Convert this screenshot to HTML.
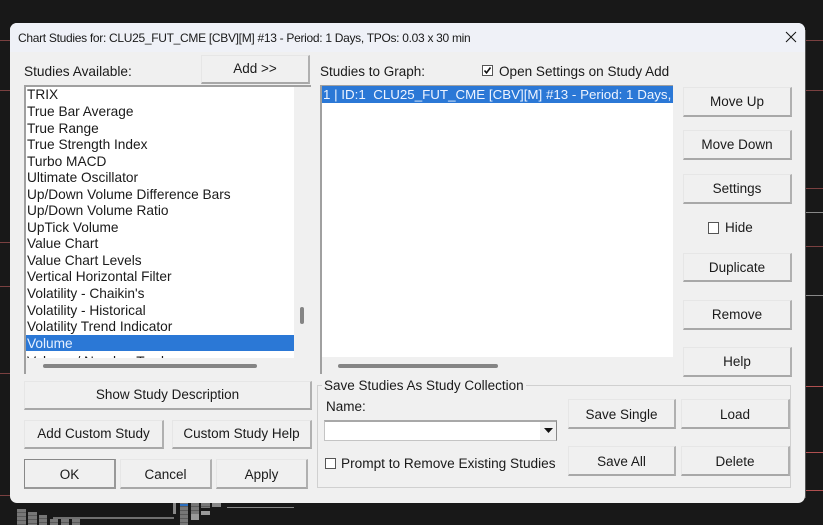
<!DOCTYPE html>
<html><head><meta charset="utf-8"><style>
html,body{margin:0;padding:0;width:823px;height:525px;overflow:hidden;background:#181818;font-family:"Liberation Sans",sans-serif;font-size:13.5px;color:#1a1a1a}
div{position:absolute;box-sizing:border-box;white-space:nowrap}
.l{height:1px}
.t{line-height:16px;height:16px}
.b{background:#f0f0f0;border:1px solid #e6e6e6;border-right:2px solid #b0b0b0;border-bottom:2px solid #a8a8a8;text-align:center;color:#1a1a1a;display:flex;align-items:center;justify-content:center}
.u{padding-bottom:1px}
.d{padding-top:1px}
.r{height:16px;line-height:16px;left:27px;color:#1a1a1a;font-size:13.7px}
.g{background:repeating-linear-gradient(#777 0 3px,#5a5a5a 3px 4px)}
</style></head><body>
<div class="l" style="left:0;top:40px;width:12px;background:#7a4040"></div>
<div class="l" style="left:0;top:90px;width:12px;background:#7a4040"></div>
<div class="l" style="left:0;top:242px;width:12px;background:#7a4040"></div>
<div class="l" style="left:0;top:286px;width:12px;background:#7a4040"></div>
<div class="l" style="left:0;top:373px;width:12px;background:#7a4040"></div>
<div class="l" style="left:0;top:495px;width:12px;background:#7a4040"></div>
<div class="l" style="left:805px;top:40px;width:18px;background:#7a4040"></div>
<div class="l" style="left:805px;top:90px;width:18px;background:#7a4040"></div>
<div class="l" style="left:805px;top:188px;width:18px;background:#7a4040"></div>
<div class="l" style="left:805px;top:212px;width:18px;background:#888"></div>
<div class="l" style="left:805px;top:246px;width:18px;background:#7a4040"></div>
<div class="l" style="left:805px;top:295px;width:18px;background:#888"></div>
<div class="l" style="left:805px;top:386px;width:18px;background:#b05050"></div>
<div class="l" style="left:805px;top:452px;width:18px;background:#b05050"></div>
<div class="l" style="left:805px;top:490px;width:18px;background:#b05050"></div>
<div style="left:805px;top:30px;width:1px;height:468px;background:#555"></div>

<div class="g" style="left:17px;top:509px;width:9px;height:16px"></div>
<div class="g" style="left:28px;top:512px;width:9px;height:13px"></div>
<div class="g" style="left:39px;top:515px;width:8px;height:10px"></div>
<div class="g" style="left:50px;top:519px;width:8px;height:6px"></div>
<div class="g" style="left:61px;top:519px;width:8px;height:6px"></div>
<div class="g" style="left:72px;top:519px;width:8px;height:6px"></div>
<div class="l" style="left:53px;top:517px;width:121px;height:2px;background:#707070"></div>
<div style="left:173px;top:503px;width:3px;height:11px;background:#888"></div>
<div class="g" style="left:180px;top:503px;width:8px;height:22px"></div>
<div style="left:180px;top:504px;width:8px;height:2px;background:#2a6fc0"></div>
<div class="g" style="left:191px;top:503px;width:8px;height:11px"></div>
<div style="left:191px;top:514px;width:8px;height:6px;background:#999"></div>
<div class="g" style="left:201px;top:503px;width:9px;height:5px"></div>
<div style="left:201px;top:511px;width:9px;height:4px;background:#999"></div>
<div style="left:212px;top:503px;width:9px;height:4px;background:#888"></div>
<div class="l" style="left:227px;top:507px;width:67px;background:#888"></div>

<div style="left:10px;top:23px;width:795px;height:480px;background:#f0f0f0;border-radius:7px;overflow:hidden">
<div style="left:0;top:0;width:795px;height:29px;background:#eff1f7"></div>
</div>
<div class="t" style="left:18px;top:30px;font-size:12px;letter-spacing:-.3px">Chart Studies for: CLU25_FUT_CME [CBV][M] #13 - Period: 1 Days, TPOs: 0.03 x 30 min</div>
<svg style="position:absolute;left:785px;top:31px" width="12" height="12"><path d="M1 1L11 11M11 1L1 11" stroke="#111" stroke-width="1" fill="none"/></svg>

<div class="t" style="left:24px;top:64px;font-size:13.7px">Studies Available:</div>
<div class="b" style="left:201px;top:55px;width:109px;height:29px;padding-bottom:1px">Add &gt;&gt;</div>

<div style="left:24px;top:85px;width:287px;height:289px;border-top:2px solid #a0a0a0;border-left:2px solid #a0a0a0"></div>
<div style="left:26px;top:87px;width:268px;height:271px;background:#fff;overflow:hidden"></div>
<div class="r" style="top:87px">TRIX</div>
<div class="r" style="top:104px">True Bar Average</div>
<div class="r" style="top:121px">True Range</div>
<div class="r" style="top:137px">True Strength Index</div>
<div class="r" style="top:154px">Turbo MACD</div>
<div class="r" style="top:170px">Ultimate Oscillator</div>
<div class="r" style="top:187px">Up/Down Volume Difference Bars</div>
<div class="r" style="top:203px">Up/Down Volume Ratio</div>
<div class="r" style="top:220px">UpTick Volume</div>
<div class="r" style="top:236px">Value Chart</div>
<div class="r" style="top:253px">Value Chart Levels</div>
<div class="r" style="top:269px">Vertical Horizontal Filter</div>
<div class="r" style="top:286px">Volatility - Chaikin's</div>
<div class="r" style="top:303px">Volatility - Historical</div>
<div class="r" style="top:319px">Volatility Trend Indicator</div>
<div style="left:26px;top:335px;width:268px;height:16px;background:#2b78d6"></div>
<div class="r" style="top:336px;color:#e6f0ff">Volume</div>
<div style="left:26px;top:351px;width:268px;height:7px;overflow:hidden;background:#fff"><div class="r" style="left:1px;top:3px">Volume / Number Trades</div></div>
<div style="left:43px;top:364px;width:214px;height:4px;background:#858585;border-radius:2px"></div>
<div style="left:300px;top:307px;width:4px;height:17px;background:#858585;border-radius:2px"></div>

<div class="b u" style="left:24px;top:381px;width:288px;height:29px">Show Study Description</div>
<div class="b u" style="left:24px;top:420px;width:140px;height:29px">Add Custom Study</div>
<div class="b u" style="left:172px;top:420px;width:140px;height:29px">Custom Study Help</div>
<div class="b d" style="left:24px;top:459px;width:92px;height:30px;border:1px solid #888;border-right:2px solid #999;border-bottom:2px solid #999">OK</div>
<div class="b d" style="left:120px;top:459px;width:92px;height:30px">Cancel</div>
<div class="b d" style="left:216px;top:459px;width:92px;height:30px">Apply</div>

<div class="t" style="left:320px;top:64px">Studies to Graph:</div>
<div style="left:482px;top:65px;width:11px;height:11px;border:1px solid #555;background:#fff"></div>
<svg style="position:absolute;left:483px;top:66px" width="9" height="9"><path d="M1.5 4.5L3.5 6.8L7.5 1.5" stroke="#111" stroke-width="1.6" fill="none"/></svg>
<div class="t" style="left:499px;top:64px;font-size:13.55px">Open Settings on Study Add</div>

<div style="left:320px;top:85px;width:353px;height:289px;border-top:1px solid #a0a0a0;border-left:2px solid #a0a0a0"></div>
<div style="left:322px;top:86px;width:351px;height:271px;background:#fff"></div>
<div style="left:322px;top:86px;width:351px;height:17px;background:#2b78d6;color:#eef4ff;overflow:hidden;line-height:17px;padding-left:1px;font-size:13.35px">1 | ID:1&nbsp; CLU25_FUT_CME [CBV][M] #13 - Period: 1 Days,</div>
<div style="left:338px;top:364px;width:160px;height:4px;background:#858585;border-radius:2px"></div>

<div class="b u" style="left:683px;top:87px;width:109px;height:30px">Move Up</div>
<div class="b" style="left:683px;top:130px;width:109px;height:30px">Move Down</div>
<div class="b u" style="left:683px;top:174px;width:109px;height:30px">Settings</div>
<div style="left:708px;top:222px;width:11px;height:12px;border:1px solid #555;background:#fff"></div>
<div class="t" style="left:725px;top:220px">Hide</div>
<div class="b" style="left:683px;top:253px;width:109px;height:29px">Duplicate</div>
<div class="b u" style="left:683px;top:300px;width:109px;height:30px">Remove</div>
<div class="b" style="left:683px;top:347px;width:109px;height:30px">Help</div>

<div style="left:317px;top:385px;width:474px;height:103px;border:1px solid #d0d0d0"></div>
<div class="t" style="left:322px;top:378px;background:#f0f0f0;padding:0 2px">Save Studies As Study Collection</div>
<div class="t" style="left:326px;top:399px">Name:</div>
<div style="left:324px;top:420px;width:233px;height:21px;background:#fff;border:1px solid #c4c4c4;border-top:2px solid #a8a8a8;border-right:1px solid #888"></div>
<div style="left:540px;top:422px;width:16px;height:18px;background:#f0f0f0"></div>
<svg style="position:absolute;left:543px;top:428px" width="11" height="6"><path d="M1 0H10L5.5 5Z" fill="#111"/></svg>
<div style="left:325px;top:458px;width:11px;height:11px;border:1px solid #555;background:#fff"></div>
<div class="t" style="left:341px;top:456px;font-size:13.65px">Prompt to Remove Existing Studies</div>
<div class="b d" style="left:568px;top:399px;width:108px;height:30px">Save Single</div>
<div class="b d" style="left:681px;top:399px;width:109px;height:30px">Load</div>
<div class="b d" style="left:568px;top:446px;width:108px;height:30px">Save All</div>
<div class="b d" style="left:681px;top:446px;width:109px;height:30px">Delete</div>
</body></html>
